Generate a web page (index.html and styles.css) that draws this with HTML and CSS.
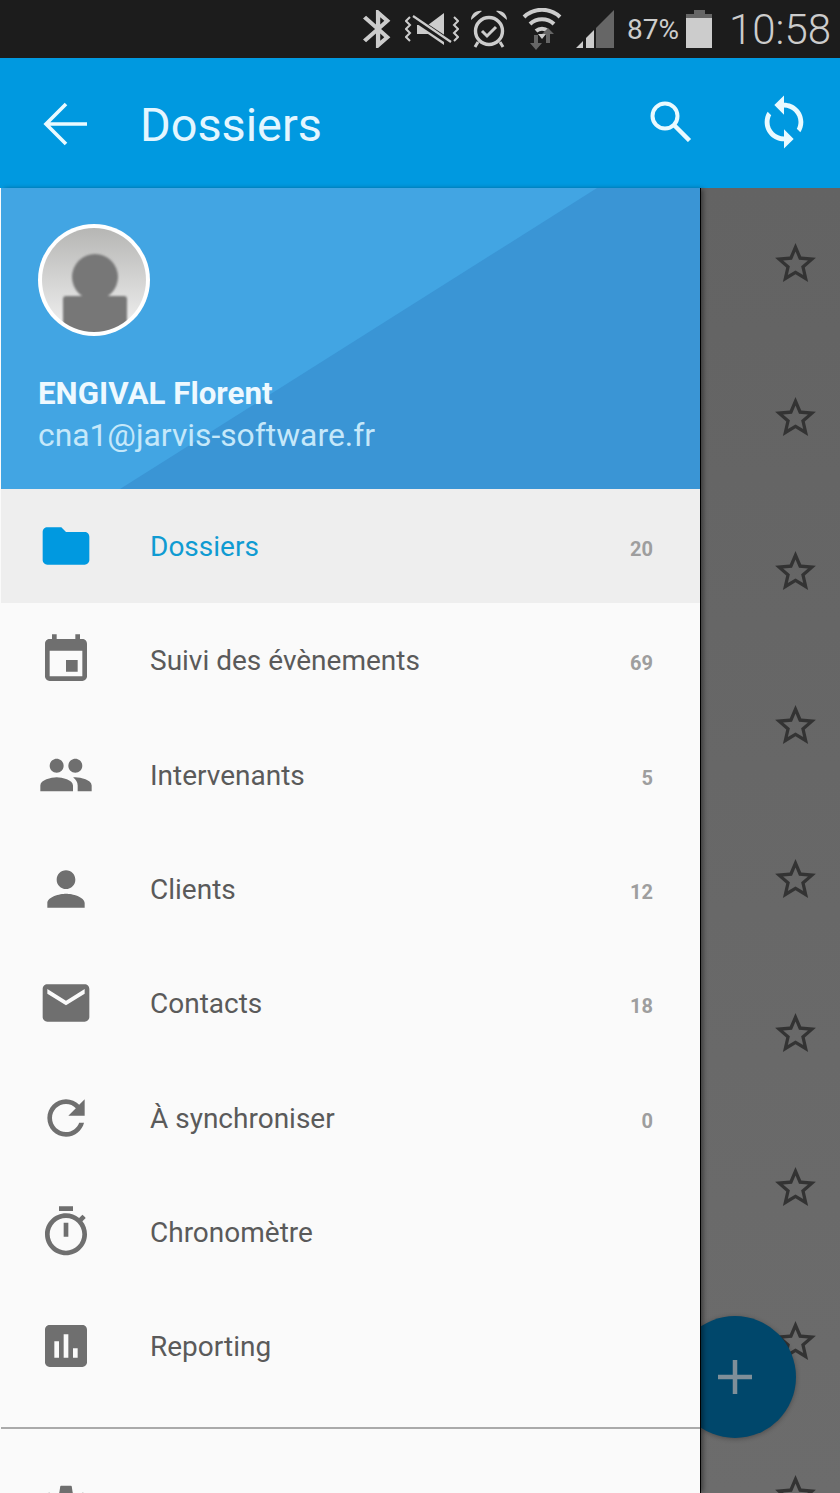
FILE: index.html
```html
<!DOCTYPE html>
<html lang="fr">
<head>
    <meta charset="UTF-8">
    <title>Dossiers</title>
    <link rel="stylesheet" href="styles.css">
</head>
<body>
    <svg class="sprite" width="0" height="0">
        <symbol id="star" viewBox="0 0 24 24"><path d="M22 9.24l-7.19-.62L12 2 9.19 8.63 2 9.24l5.46 4.73L5.82 21 12 17.27 18.18 21l-1.63-7.03L22 9.24zM12 15.4l-3.76 2.27 1-4.28-3.32-2.88 4.38-.38L12 6.1l1.71 4.04 4.38.38-3.32 2.88 1 4.28L12 15.4z"/></symbol>
    </svg>

    <div class="status-bar">
        <svg class="st-bluetooth" width="28" height="38" viewBox="5 2 13 20" preserveAspectRatio="none"><path d="M17.71 7.71L12 2h-1v7.59L6.41 5 5 6.41 10.59 12 5 17.59 6.41 19 11 14.41V22h1l5.71-5.71-4.3-4.29 4.3-4.29zM13 5.83l1.88 1.88L13 9.59V5.83zm1.88 10.46L13 18.17v-3.76l1.88 1.88z"/></svg>
        <svg class="st-mute" width="54" height="34" viewBox="0 0 54 34">
            <path d="M12 13h11L39 1v32L23 22H12z"/>
            <path d="M7 5l39 26" stroke="#1c1c1c" stroke-width="6"/>
            <path d="M8 4l38 26" stroke="#ccc" stroke-width="2.2"/>
            <path d="M5 5L1 9l4 4-4 4 4 4-4 4 4 4M49 5l4 4-4 4 4 4-4 4 4 4-4 4" fill="none" stroke="#ccc" stroke-width="2"/>
        </svg>
        <svg class="st-alarm" width="36" height="38" viewBox="0 0 36 38">
            <circle cx="18" cy="21" r="13.5" fill="none" stroke="#ccc" stroke-width="3.4"/>
            <path d="M0 10c0-6 5-10 11-9zM36 10c0-6-5-10-11-9z"/>
            <path d="M11 21l5 5 9-9" fill="none" stroke="#ccc" stroke-width="3"/>
            <path d="M7 32l-3 5M29 32l3 5" stroke="#ccc" stroke-width="3"/>
        </svg>
        <svg class="st-wifi" width="40" height="42" viewBox="0 0 40 42">
            <path d="M2 9a26 26 0 0 1 36 0" fill="none" stroke="#ccc" stroke-width="4"/>
            <path d="M8 16a17.500 17.500 0 0 1 24 0" fill="none" stroke="#ccc" stroke-width="4"/>
            <path d="M14 23a9 9 0 0 1 12 0" fill="none" stroke="#ccc" stroke-width="4"/>
            <path d="M20 31l-4-5h8z"/>
            <path d="M12 27h4v8h4l-6 7-6-7h4zM24 35h4v-9h4l-6-6-6 6h4z" fill="#666"/>
        </svg>
        <svg class="st-signal" width="38" height="38" viewBox="0 0 38 38">
            <path d="M0 38l7-7v7zM10 28l8-8v18h-8z"/>
            <path d="M20 18L38 0v38H20z" fill="#666"/>
        </svg>
        <span class="st-battery-text">87%</span>
        <div class="st-battery"><div class="st-battery-cap"></div><div class="st-battery-top"></div><div class="st-battery-body"></div></div>
        <span class="st-time">10:58</span>
    </div>

    <div class="app-bar">
        <svg class="back-icon" width="44" height="44" viewBox="0 0 44 44"><path d="M44 22H3M23 2L3 22l20 20" fill="none" stroke="#eafaff" stroke-width="3.6"/></svg>
        <div class="app-title">Dossiers</div>
        <svg class="search-icon" width="42" height="42" viewBox="0 0 42 42"><circle cx="15" cy="16" r="12.500" fill="none" stroke="#eafaff" stroke-width="4"/><path d="M24 25l15.500 15.500" stroke="#eafaff" stroke-width="4.500"/></svg>
        <svg class="sync-icon" width="58" height="58" viewBox="0 0 24 24"><path d="M12 4V1L8 5l4 4V6c3.31 0 6 2.69 6 6 0 1.010-.25 1.970-.7 2.800l1.460 1.460C19.540 15.030 20 13.570 20 12c0-4.420-3.580-8-8-8zm0 14c-3.310 0-6-2.690-6-6 0-1.010.25-1.970.7-2.800L5.240 7.740C4.460 8.970 4 10.430 4 12c0 4.420 3.580 8 8 8v3l4-4-4-4v3z"/></svg>
    </div>

    <div class="main">
        <div class="drawer">
            <div class="profile">
                <svg class="avatar" width="112" height="112" viewBox="0 0 112 112">
                    <defs>
                        <linearGradient id="avatar-bg" x1="0" y1="0" x2="0" y2="1"><stop offset="0" stop-color="#b6b6b4"/><stop offset="1" stop-color="#f2f2f2"/></linearGradient>
                        <clipPath id="avatar-clip"><circle cx="56" cy="56" r="52"/></clipPath>
                        <filter id="avatar-blur"><feGaussianBlur stdDeviation="0.8"/></filter>
                    </defs>
                    <circle cx="56" cy="56" r="56" fill="#fff"/>
                    <circle cx="56" cy="56" r="52" fill="url(#avatar-bg)"/>
                    <g clip-path="url(#avatar-clip)" fill="#777" filter="url(#avatar-blur)">
                        <circle cx="57" cy="53" r="23"/>
                        <rect x="25" y="72" width="64" height="44" rx="3"/>
                    </g>
                </svg>
                <div class="profile-name">ENGIVAL Florent</div>
                <div class="profile-mail">cna1@jarvis-software.fr</div>
            </div>

            <div class="menu">
                <div class="menu-row active">
                    <svg class="menu-icon" viewBox="0 0 24 24"><path d="M10 4H4c-1.100 0-2 .9-2 2v12c0 1.100.9 2 2 2h16c1.100 0 2-.9 2-2V8c0-1.100-.9-2-2-2h-8l-2-2z"/></svg>
                    <span class="menu-label">Dossiers</span>
                    <span class="menu-count">20</span>
                </div>
                <div class="menu-row">
                    <svg class="menu-icon" viewBox="0 0 24 24"><path d="M17 12h-5v5h5v-5zM16 1v2H8V1H6v2H5c-1.110 0-1.990.9-1.990 2L3 19c0 1.100.89 2 2 2h14c1.100 0 2-.9 2-2V5c0-1.100-.9-2-2-2h-1V1h-2zm3 18H5V8h14v11z"/></svg>
                    <span class="menu-label">Suivi des évènements</span>
                    <span class="menu-count">69</span>
                </div>
                <div class="menu-row">
                    <svg class="menu-icon" viewBox="0 0 24 24"><path d="M16 11c1.660 0 2.990-1.340 2.990-3S17.660 5 16 5c-1.660 0-3 1.340-3 3s1.340 3 3 3zm-8 0c1.660 0 2.990-1.340 2.990-3S9.660 5 8 5C6.340 5 5 6.340 5 8s1.340 3 3 3zm0 2c-2.330 0-7 1.170-7 3.500V19h14v-2.500c0-2.330-4.670-3.500-7-3.500zm8 0c-.29 0-.62.02-.97.05 1.160.84 1.970 1.970 1.970 3.450V19h6v-2.500c0-2.330-4.670-3.500-7-3.500z"/></svg>
                    <span class="menu-label">Intervenants</span>
                    <span class="menu-count">5</span>
                </div>
                <div class="menu-row">
                    <svg class="menu-icon" viewBox="0 0 24 24"><path d="M12 12c2.210 0 4-1.790 4-4s-1.790-4-4-4-4 1.790-4 4 1.790 4 4 4zm0 2c-2.670 0-8 1.340-8 4v2h16v-2c0-2.660-5.330-4-8-4z"/></svg>
                    <span class="menu-label">Clients</span>
                    <span class="menu-count">12</span>
                </div>
                <div class="menu-row">
                    <svg class="menu-icon" viewBox="0 0 24 24"><path d="M20 4H4c-1.100 0-1.990.9-1.990 2L2 18c0 1.100.9 2 2 2h16c1.100 0 2-.9 2-2V6c0-1.100-.9-2-2-2zm0 4l-8 5-8-5V6l8 5 8-5v2z"/></svg>
                    <span class="menu-label">Contacts</span>
                    <span class="menu-count">18</span>
                </div>
                <div class="menu-row">
                    <svg class="menu-icon" viewBox="0 0 24 24"><path d="M17.650 6.350C16.200 4.900 14.210 4 12 4c-4.420 0-7.990 3.580-7.990 8s3.570 8 7.990 8c3.730 0 6.840-2.550 7.730-6h-2.080c-.82 2.330-3.040 4-5.650 4-3.310 0-6-2.690-6-6s2.690-6 6-6c1.660 0 3.140.69 4.220 1.780L13 11h7V4l-2.350 2.350z"/></svg>
                    <span class="menu-label">À synchroniser</span>
                    <span class="menu-count">0</span>
                </div>
                <div class="menu-row">
                    <svg class="menu-icon" viewBox="0 0 24 24"><path d="M15 1H9v2h6V1zm-4 13h2V8h-2v6zm8.030-6.610l1.420-1.420c-.43-.51-.9-.99-1.410-1.410l-1.420 1.420C16.070 4.740 14.120 4 12 4c-4.970 0-9 4.030-9 9s4.020 9 9 9 9-4.030 9-9c0-2.120-.74-4.070-1.970-5.610zM12 20c-3.870 0-7-3.130-7-7s3.130-7 7-7 7 3.130 7 7-3.130 7-7 7z"/></svg>
                    <span class="menu-label">Chronomètre</span>
                </div>
                <div class="menu-row">
                    <svg class="menu-icon" viewBox="0 0 24 24"><path d="M19 3H5c-1.100 0-2 .9-2 2v14c0 1.100.9 2 2 2h14c1.100 0 2-.9 2-2V5c0-1.100-.9-2-2-2zM9 17H7v-7h2v7zm4 0h-2V7h2v10zm4 0h-2v-4h2v4z"/></svg>
                    <span class="menu-label">Reporting</span>
                </div>
                <div class="menu-divider"></div>
                <div class="menu-row">
                    <svg class="menu-icon" viewBox="0 0 24 24"><path d="M19.430 12.980c.04-.32.07-.64.07-.98s-.03-.66-.07-.98l2.110-1.650c.19-.15.24-.42.12-.64l-2-3.460c-.12-.22-.39-.3-.61-.22l-2.490 1c-.52-.4-1.080-.73-1.690-.98l-.38-2.650C14.460 2.180 14.250 2 14 2h-4c-.25 0-.46.18-.49.42l-.38 2.650c-.61.25-1.170.59-1.690.98l-2.490-1c-.23-.09-.49 0-.61.22l-2 3.460c-.13.22-.07.49.12.64l2.110 1.650c-.04.32-.07.65-.07.98s.03.66.07.98l-2.110 1.650c-.19.15-.24.42-.12.64l2 3.460c.12.22.39.3.61.22l2.490-1c.52.4 1.080.73 1.690.98l.38 2.650c.03.24.24.42.49.42h4c.25 0 .46-.18.49-.42l.38-2.650c.61-.25 1.170-.59 1.690-.98l2.490 1c.23.09.49 0 .61-.22l2-3.460c.12-.22.07-.49-.12-.64l-2.110-1.650zM12 15.500c-1.930 0-3.500-1.570-3.500-3.500s1.570-3.500 3.500-3.500 3.500 1.570 3.500 3.500-1.570 3.500-3.500 3.500z"/></svg>
                </div>
            </div>
        </div>

        <div class="dimmed">
            <div class="star-row"><svg class="star"><use href="#star"/></svg></div>
            <div class="star-row"><svg class="star"><use href="#star"/></svg></div>
            <div class="star-row"><svg class="star"><use href="#star"/></svg></div>
            <div class="star-row"><svg class="star"><use href="#star"/></svg></div>
            <div class="star-row"><svg class="star"><use href="#star"/></svg></div>
            <div class="star-row"><svg class="star"><use href="#star"/></svg></div>
            <div class="star-row"><svg class="star"><use href="#star"/></svg></div>
            <div class="star-row"><svg class="star"><use href="#star"/></svg></div>
            <div class="star-row"><svg class="star"><use href="#star"/></svg></div>
            <div class="fab">
                <svg width="34" height="34" viewBox="0 0 34 34"><path d="M0 17h34M17 0v34" stroke="#7f8f99" stroke-width="4.500"/></svg>
            </div>
        </div>
    </div>
</body>
</html>
```

FILE: styles.css
```css
html, body {
    margin: 0;
    height: 100%;
}
body {
    width: 840px;
    height: 1493px;
    overflow: hidden;
    display: flex;
    flex-direction: column;
    font-family: Roboto, "Liberation Sans", sans-serif;
    background: #666;
}
.sprite {
    position: absolute;
}

/* status bar */
.status-bar {
    height: 58px;
    flex: none;
    display: flex;
    align-items: center;
    justify-content: flex-end;
    padding-right: 12px;
    background: #1c1c1c;
    color: #ccc;
}
.status-bar svg {
    flex: none;
    fill: #ccc;
}
.st-mute { margin-left: 14px; }
.st-alarm { margin-left: 12px; }
.st-wifi { margin-left: 15px; }
.st-signal { margin-left: 14px; }
.st-battery-text {
    margin-left: 13px;
    font-size: 28px;
    width: 52px;
    white-space: nowrap;
}
.st-battery {
    margin-left: 7px;
    width: 26px;
    height: 38px;
    display: flex;
    flex-direction: column;
    align-items: center;
}
.st-battery-cap {
    width: 11px;
    height: 4px;
    background: #666;
}
.st-battery-top {
    width: 100%;
    height: 4px;
    background: #666;
}
.st-battery-body {
    width: 100%;
    flex: 1;
    background: #ccc;
}
.st-time {
    margin-left: 17px;
    font-size: 42px;
    font-weight: 300;
    width: 99px;
    white-space: nowrap;
}

/* app bar */
.app-bar {
    height: 130px;
    flex: none;
    display: flex;
    align-items: center;
    padding-left: 43px;
    background: #0099e0;
}
.back-icon {
    flex: none;
    margin-top: 2px;
}
.app-title {
    margin-left: 53px;
    width: 510px;
    font-size: 46.8px;
    color: #e4f6ff;
    padding-top: 4px;
}
.search-icon {
    flex: none;
    margin-top: -5px;
}
.sync-icon {
    flex: none;
    margin-left: 63px;
    fill: #eafaff;
    margin-top: -2px;
}

/* drawer */
.main {
    flex: 1;
    display: flex;
    min-height: 0;
}
.drawer {
    width: 699px;
    flex: none;
    position: relative;
    z-index: 1;
    overflow: hidden;
    padding-left: 1px;
    background: #fafafa;
    border-right: 1px solid #000;
    box-shadow: 3px 0 5px -1px rgba(0, 0, 0, 0.45);
}
.profile {
    height: 301px;
    box-sizing: border-box;
    padding: 36px 0 0 37px;
    position: relative;
    background: #42a5e3;
}
.profile::before {
    content: "";
    position: absolute;
    inset: 0;
    background: #3a95d5;
    clip-path: polygon(596px 0, 100% 0, 100% 100%, 119px 100%);
}
.avatar, .profile-name, .profile-mail {
    position: relative;
    display: block;
}
.profile-name {
    margin-top: 40px;
    font-size: 31.3px;
    font-weight: 700;
    line-height: 36px;
    color: #eef9ff;
}
.profile-mail {
    margin-top: 5px;
    font-size: 31.8px;
    line-height: 36px;
    color: #c5e8fa;
}
.menu-row {
    height: 114.3px;
    box-sizing: border-box;
    display: flex;
    align-items: center;
    padding: 0 47px 0 37px;
}
.menu-icon {
    width: 56px;
    height: 56px;
    flex: none;
    fill: #6f6f6f;
    margin-right: 56px;
}
.menu-label {
    flex: 1;
    font-size: 28px;
    color: #5a5a5a;
    padding-top: 1px;
}
.menu-count {
    font-size: 20px;
    font-weight: 700;
    color: #9e9e9e;
    padding-top: 6px;
}
.menu-row.active {
    background: #eee;
}
.menu-row.active .menu-icon {
    fill: #0099e0;
}
.menu-row.active .menu-label {
    color: #0f9bd2;
}
.menu-divider {
    height: 2px;
    margin-top: 24px;
    margin-bottom: 22px;
    background: #aaa;
}

/* page behind the drawer */
.dimmed {
    flex: 1;
    position: relative;
    overflow: hidden;
    background: linear-gradient(#636363, #6c6c6c);
}
.star-row {
    height: 154px;
    display: flex;
    align-items: center;
    justify-content: center;
    padding-left: 50px;
    box-sizing: border-box;
}
.star-row:first-child {
    margin-top: -2px;
}
.star {
    width: 49px;
    height: 49px;
    fill: #333;
}
.fab {
    position: absolute;
    left: -27px;
    top: 1128px;
    width: 122px;
    height: 122px;
    border-radius: 50%;
    background: #00476b;
    box-shadow: 0 1px 5px rgba(0, 0, 0, 0.3);
    display: flex;
    align-items: center;
    justify-content: center;
}
```
